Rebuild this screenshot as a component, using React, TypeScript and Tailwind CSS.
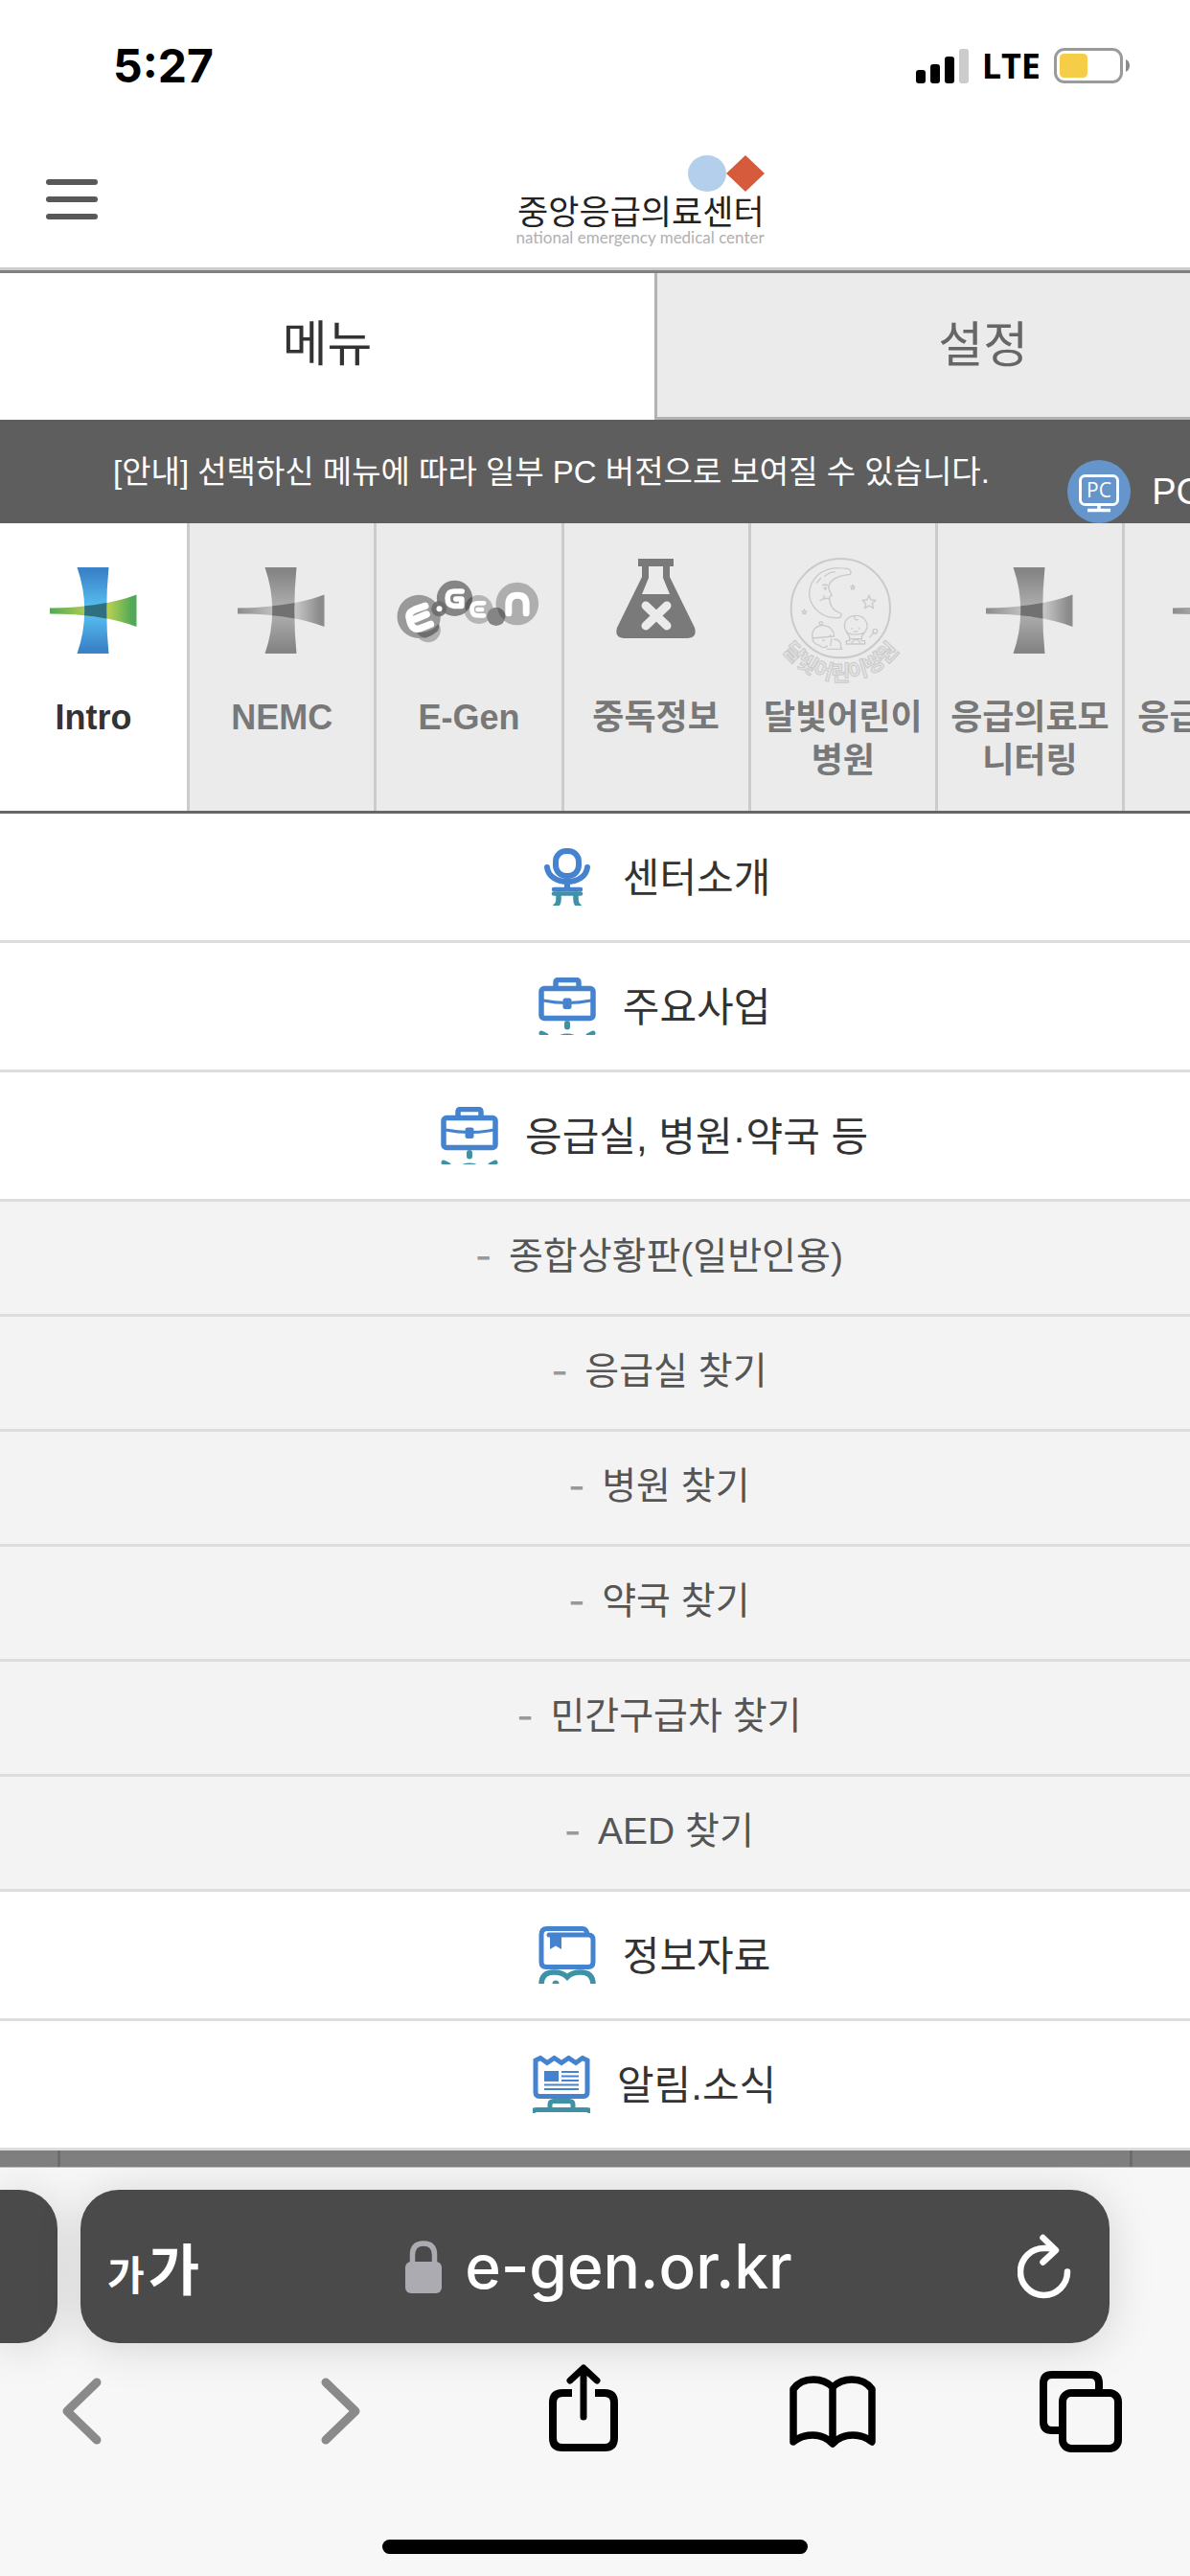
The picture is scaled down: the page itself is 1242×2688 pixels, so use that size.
import React from "react";

const KR = "font-['Liberation_Sans','Noto_Sans_CJK_KR',sans-serif]";

function SignalIcon() {
  return (
    <svg viewBox="0 0 55 36" className="h-9 w-[55px]" aria-hidden="true">
      <rect x="0" y="22" width="10" height="14" rx="3" fill="#000" />
      <rect x="15" y="16" width="10" height="20" rx="3" fill="#000" />
      <rect x="30" y="8" width="10" height="28" rx="3" fill="#000" />
      <rect x="45" y="0" width="10" height="36" rx="3" fill="#ccc" />
    </svg>
  );
}

function BatteryIcon() {
  return (
    <svg viewBox="0 0 80 37" className="h-[37px] w-20" aria-hidden="true">
      <rect x="1.5" y="1.5" width="69" height="34" rx="9.5" fill="none" stroke="#9a9a9a" strokeWidth="3" />
      <rect x="6" y="6" width="29" height="25" rx="4.5" fill="#f6cd46" />
      <path d="M75 12c2.600 1 4 3.500 4 6.500s-1.400 5.500-4 6.500z" fill="#8a8a8a" />
    </svg>
  );
}

function LogoMark() {
  return (
    <svg viewBox="0 0 80 38" className="h-[38px] w-20" aria-hidden="true">
      <ellipse cx="20" cy="19" rx="20" ry="19" fill="#b4cfec" />
      <path d="M60 0L80 19L60 38L40 19Z" fill="#d65b3d" />
    </svg>
  );
}

function PcIcon() {
  return (
    <svg viewBox="0 0 66 66" className="size-[66px]" aria-hidden="true">
      <circle cx="33" cy="33" r="33" fill="#6595ca" />
      <rect x="13.500" y="16.500" width="39" height="30" rx="5" fill="none" stroke="#fff" strokeWidth="3" />
      <path d="M33 47v5M21 52.500h24" stroke="#fff" strokeWidth="3.500" fill="none" />
      <text x="33" y="39" textAnchor="middle" fontSize="21" fontFamily="Open Sans, sans-serif" fill="#fff">
        PC
      </text>
    </svg>
  );
}

function CrossIcon({ color = false, id }: { color?: boolean; id: string }) {
  const edge = color ? "#3a83c8" : "#858585";
  const mid = color ? "#56bdf0" : "#adadad";
  const tip = color ? "#4fa956" : "#8b8b8b";
  const pale = color ? "#b5cf52" : "#c4c4c4";
  const core = color ? "#2f6f80" : "#717171";
  return (
    <svg viewBox="0 0 150 130" className="h-[130px] w-[150px]" aria-hidden="true">
      <defs>
        <linearGradient id={id + "v"} x1="0" y1="0" x2="0" y2="1">
          <stop offset="0.05" stopColor={edge} />
          <stop offset="0.45" stopColor={mid} />
          <stop offset="0.55" stopColor={mid} />
          <stop offset="0.95" stopColor={edge} />
        </linearGradient>
        <linearGradient id={id + "h"} x1="0" y1="0" x2="1" y2="0">
          <stop offset="0" stopColor={tip} />
          <stop offset="0.45" stopColor={pale} />
          <stop offset="0.68" stopColor={pale} />
          <stop offset="0.95" stopColor={tip} />
        </linearGradient>
        <clipPath id={id + "c"}>
          <path d="M57.500 10H90.500Q86 55 90.500 100H57.500Q73 55 57.500 10Z" />
        </clipPath>
      </defs>
      <path d="M57.500 10H90.500Q86 55 90.500 100H57.500Q73 55 57.500 10Z" fill={`url(#${id}v)`} />
      <path d="M29 52.500Q84 52 119.500 38.500V72Q84 58.500 29 58.500Z" fill={`url(#${id}h)`} />
      <path d="M29 52.500Q84 52 119.500 38.500V72Q84 58.500 29 58.500Z" fill={core} clipPath={`url(#${id}c)`} />
    </svg>
  );
}

function EGenIcon() {
  return (
    <svg viewBox="0 0 150 130" className="h-[130px] w-[150px]" aria-hidden="true">
      <g transform="translate(-9.500 8) scale(0.3333)">
        <circle cx="127" cy="202" r="39" fill="#b0b0b0" />
        <circle cx="98" cy="160" r="68" fill="#999" />
        <path d="M90 208Q135 214 160 182Q164 192 158 204Q142 220 118 227Q100 226 90 208Z" fill="#6e6e6e" />
        <circle cx="285" cy="138" r="45" fill="#b5b5b5" />
        <circle cx="210" cy="103" r="56" fill="#858585" />
        <circle cx="161" cy="136" r="24" fill="#6a6a6a" opacity="0.85" />
        <path d="M262 98Q250 105 244 120Q242 132 245 144Q262 128 266 103Z" fill="#5f5f5f" />
        <circle cx="406" cy="120" r="67" fill="#aeaeae" />
        <circle cx="340" cy="160" r="29" fill="#858585" />
        <path d="M343 132Q352 168 367 168Q372 150 360 140Q352 132 343 132Z" fill="#6a6a6a" />
        <circle cx="162" cy="136" r="9" fill="#fff" />
        <g fill="none" stroke="#fff" strokeLinecap="round" strokeLinejoin="round">
          <path d="M118 127L84 139Q62 148 69 170Q76 204 100 198L135 184M86 168L122 153" strokeWidth="22" />
          <path d="M233 81H208Q188 81 188 103Q188 127 208 127H232V105H214" strokeWidth="17" />
          <path d="M302 118H282Q264 118 264 137Q264 157 284 157H302M282 138H296" strokeWidth="14" />
          <path d="M379 149V122Q379 94 407 94Q434 94 434 122V149" strokeWidth="21" />
        </g>
      </g>
    </svg>
  );
}

function FlaskIcon() {
  return (
    <svg viewBox="0 0 150 130" className="h-[130px] w-[150px]" aria-hidden="true">
      <path
        fillRule="evenodd"
        d="M56 1H93V9H89V20L115 73Q118 83 108 84H41Q31 83 34 73L60 20V9H56ZM67 9V21L60 38H89L82 21V9Z"
        fill="#7a7a7a"
      />
      <path d="M64 50L86 71M86 50L64 71" stroke="#ebebeb" strokeWidth="9" strokeLinecap="round" />
    </svg>
  );
}

function MoonIcon() {
  return (
    <svg viewBox="0 0 150 130" className="h-[130px] w-[150px] overflow-visible" aria-hidden="true">
      <g
        transform="translate(-5 -12) scale(0.3333)"
        fill="none"
        stroke="#cacaca"
        strokeWidth="4"
        strokeLinecap="round"
        strokeLinejoin="round"
      >
        <circle cx="232" cy="194" r="155" strokeWidth="6" />
        <path d="M262 88C268 76 262 68 230 68C170 66 134 105 134 152C138 196 180 228 228 224C238 218 236 210 228 208C208 200 196 182 197 158L205 154L194 132C194 110 216 92 262 88Z" />
        <path d="M158 114L170 100M182 94Q196 82 214 80M176 122Q182 118 190 122M168 170Q180 160 194 164M180 154V166" />
        <circle cx="184" cy="132" r="3" />
        <path d="M321 154L327 168L342 169L331 179L335 194L321 186L307 194L311 179L300 169L315 168Z" />
        <path d="M270 121L272 126L277 127L273 130L274 135L270 132L266 135L267 130L263 127L268 126ZM118 198L120 203L125 204L121 207L122 212L118 209L114 212L115 207L111 204L116 203Z" />
        <path d="M248 262C240 250 244 218 279 217C314 216 320 250 312 262M248 262C252 280 304 282 312 262M276 220Q274 232 286 230M250 268L260 284V296H250V306H308V296H298V284L308 268M262 290H296M266 306Q270 292 280 292Q290 292 294 306" />
        <path d="M266 258H268M290 258H292M274 266Q279 270 285 266M330 276L336 270M324 284L328 280" />
        <circle cx="340" cy="266" r="7" />
        <path d="M144 284C140 262 158 246 178 248C200 250 210 262 212 282L144 288C144 296 150 308 166 310C170 318 184 320 190 312M212 292C226 290 236 304 232 314L236 322H190M204 290L200 310M176 294L182 296M198 284L200 278" />
        <circle cx="171" cy="241" r="5" />
      </g>
      <defs>
        <path id="moonArc" d="M1.800 78.400A75 75 0 0 0 142.800 78.400" />
      </defs>
      <text
        fontFamily="Noto Sans CJK KR, sans-serif"
        fontWeight="700"
        fontSize="22"
        fill="#e4e4e4"
        stroke="#cacaca"
        strokeWidth="1"
        textAnchor="middle"
      >
        <textPath href="#moonArc" startOffset="50%">
          달빛어린이병원
        </textPath>
      </text>
    </svg>
  );
}

const BLUE = "#4683cf";
const TEAL = "#3f91a5";

function ChairIcon() {
  return (
    <svg viewBox="0 0 60 60" className="size-[60px]" aria-hidden="true" fill="none" strokeLinecap="round">
      <rect x="18" y="3" width="24" height="26" rx="11" stroke={BLUE} strokeWidth="6" />
      <path d="M9 20C10 30 20 35 30 35S50 30 51 20" stroke={BLUE} strokeWidth="6" />
      <path d="M30 36V42" stroke={BLUE} strokeWidth="6" strokeLinecap="butt" />
      <path d="M16 47.500H44" stroke={TEAL} strokeWidth="4.500" />
      <path d="M16 43H44" stroke={BLUE} strokeWidth="4.500" />
      <path d="M21 48V54Q21 58 17.500 61M39 48V54Q39 58 42.500 61" stroke={TEAL} strokeWidth="5.500" />
    </svg>
  );
}

function BriefcaseIcon() {
  return (
    <svg viewBox="0 0 60 60" className="size-[60px]" aria-hidden="true" fill="none">
      <path d="M18 10V5.500Q18 2.500 21 2.500H39Q42 2.500 42 5.500V10" stroke={BLUE} strokeWidth="5.500" />
      <rect x="3" y="11.500" width="54" height="31" rx="3" stroke={BLUE} strokeWidth="5.500" />
      <path d="M5 24Q30 29 55 24" stroke={BLUE} strokeWidth="3" />
      <rect x="25.500" y="21.500" width="9" height="11.500" rx="2.500" fill={BLUE} />
      <path d="M30 48V51.500" stroke={TEAL} strokeWidth="6" strokeLinecap="round" />
      <path d="M3 58L8 60.500M57 58L52 60.500" stroke={TEAL} strokeWidth="5" strokeLinecap="round" />
      <ellipse cx="30" cy="62" rx="9" ry="3.500" fill={TEAL} />
    </svg>
  );
}

function BookIcon() {
  return (
    <svg viewBox="0 0 60 60" className="size-[60px]" aria-hidden="true" fill="none">
      <path d="M51 8Q50 2.500 46 2.500H9Q3 2.500 3 9V37Q3 42.500 8 42.500H52Q57 42.500 57 37V14Q57 9 52 9H11" stroke={BLUE} strokeWidth="5" strokeLinecap="round" />
      <path d="M12 9H24V24L18 20.500L12 24Z" fill={BLUE} />
      <path d="M3 61Q3 48 16 48Q25 48 30 53Q35 48 44 48Q57 48 57 61" stroke={TEAL} strokeWidth="5.500" />
      <circle cx="18" cy="60" r="3.500" fill={TEAL} />
    </svg>
  );
}

function NewsIcon() {
  return (
    <svg viewBox="0 0 60 60" className="size-[60px]" aria-hidden="true" fill="none">
      <path d="M3 5L8 2.500L15 7.500L22.500 2.500L30 7.500L37.500 2.500L45 7.500L52 2.500L57 5V38Q57 42.500 53 42.500H7Q3 42.500 3 38Z" stroke={BLUE} strokeWidth="5" />
      <rect x="12" y="16" width="15" height="11" fill={BLUE} />
      <path d="M30 17H48M30 21.500H48M30 26H48M12 30.500H48M12 35H48" stroke={BLUE} strokeWidth="2.200" />
      <path d="M18 56V51Q18 47.500 22 47.500H38Q42 47.500 42 51V56M0 63V60Q0 56.500 4 56.500H56Q60 56.500 60 60V63" stroke={TEAL} strokeWidth="5" />
    </svg>
  );
}

function LockIcon() {
  return (
    <svg viewBox="0 0 38 55" className="h-[55px] w-[38px]" aria-hidden="true">
      <rect x="0" y="22" width="38" height="33" rx="6" fill="#acabb2" />
      <path d="M7.500 24V15Q7.500 3 19 3Q30.500 3 30.500 15V24" fill="none" stroke="#acabb2" strokeWidth="5.500" />
    </svg>
  );
}

function ReloadIcon() {
  return (
    <svg viewBox="0 0 56 68" className="h-[68px] w-14" aria-hidden="true" fill="none" stroke="#fff" strokeWidth="6.500" strokeLinecap="round" strokeLinejoin="round">
      <path d="M38 16Q33 14.500 28 15A24.500 24.500 0 1 0 52 39.500" />
      <path d="M26.500 4L40 17L26.500 29.500" />
    </svg>
  );
}

const categories = [
  { label: "Intro", icon: <CrossIcon color id="intro" /> },
  { label: "NEMC", icon: <CrossIcon id="nemc" /> },
  { label: "E-Gen", icon: <EGenIcon /> },
  { label: "중독정보", icon: <FlaskIcon /> },
  { label: "달빛어린이병원", icon: <MoonIcon /> },
  { label: "응급의료모니터링", icon: <CrossIcon id="monitoring" /> },
  { label: "응급의료정보", icon: <CrossIcon id="info" /> },
];

const finders = ["종합상황판(일반인용)", "응급실 찾기", "병원 찾기", "약국 찾기", "민간구급차 찾기", "AED 찾기"];

function MenuRow({ icon, label }: { icon: React.ReactNode; label: string }) {
  return (
    <li>
      <a href="#" className="flex h-[135px] items-center justify-center gap-7 border-b-[3px] border-[#ddd] bg-white text-[42px] leading-none text-[#333]">
        {icon}
        <span className="pt-1">{label}</span>
      </a>
    </li>
  );
}

export default function App() {
  return (
    <div className={`flex min-h-screen flex-col overflow-hidden bg-white ${KR}`}>
      <div className="flex h-[137px] items-center justify-between pr-[62px] pl-[118px] font-['Inter',sans-serif] text-black">
        <span className="text-[48px] leading-none font-bold">5:27</span>
        <div className="flex items-center gap-3.5">
          <SignalIcon />
          <span className="font-['Open_Sans',sans-serif] text-[36px] leading-none font-bold">LTE</span>
          <BatteryIcon />
        </div>
      </div>

      <div className="w-[110%]">
        <header className="grid h-[145px] grid-cols-[1fr_auto_1fr] items-center border-b-[3px] border-[#ccc] pr-[78px] pl-12">
          <button aria-label="메뉴 열기" className="flex w-[54px] flex-col gap-3">
            <span className="h-1.5 rounded-full bg-[#585858]" />
            <span className="h-1.5 rounded-full bg-[#585858]" />
            <span className="h-1.5 rounded-full bg-[#585858]" />
          </button>
          <a href="#" className="flex flex-col items-end pt-1">
            <LogoMark />
            <span className="mt-1.5 text-[35px] leading-8 text-[#222]">중앙응급의료센터</span>
            <span className="font-['Lato',sans-serif] text-[17px] leading-5 text-[#b0b0b0]">national emergency medical center</span>
          </a>
        </header>

        <div role="tablist" className="grid h-[156px] grid-cols-2 border-t-[3px] border-[#808080] text-[51px] leading-none">
          <button role="tab" aria-selected="true" className="bg-white pb-1 text-[#333]">
            메뉴
          </button>
          <button role="tab" aria-selected="false" className="border-b-[3px] border-l-[3px] border-[#b2b2b2] bg-[#ebebeb] text-[#666]">
            설정
          </button>
        </div>

        <div className="flex h-[108px] items-center justify-between bg-[#5e5e5e] pl-[118px] text-white">
          <p className="text-[33px] leading-none whitespace-nowrap">[안내] 선택하신 메뉴에 따라 일부 PC 버전으로 보여질 수 있습니다.</p>
          <a href="#" className="flex w-[252px] items-center gap-[22px] self-end text-[38px] leading-none">
            <PcIcon />
            <span>PC</span>
          </a>
        </div>

        <nav className="grid h-[303px] grid-cols-7 border-b-[3px] border-[#666] text-[36px] leading-[45px] font-bold">
          {categories.map((c, i) => (
            <a
              key={c.label}
              href="#"
              className={
                i === 0
                  ? "flex flex-col items-center gap-3.5 bg-white pt-9 text-[#333]"
                  : "flex flex-col items-center gap-3.5 border-l-[3px] border-[#ccc] bg-[#ebebeb] pt-9 text-[#787878]"
              }
            >
              {c.icon}
              <span className="px-1 text-center break-all">{c.label}</span>
            </a>
          ))}
        </nav>

        <ul>
          <MenuRow icon={<ChairIcon />} label="센터소개" />
          <MenuRow icon={<BriefcaseIcon />} label="주요사업" />
          <MenuRow icon={<BriefcaseIcon />} label="응급실, 병원·약국 등" />
          {finders.map((f) => (
            <li key={f}>
              <a href="#" className="flex h-[120px] items-center justify-center gap-[18px] border-b-[3px] border-[#ddd] bg-[#f3f3f3] pb-1 pl-2.5 text-[39px] leading-none text-[#555]">
                <span className="pb-3 font-['Noto_Sans_CJK_KR',sans-serif] text-[48px] leading-none text-[#999]">-</span>
                <span>{f}</span>
              </a>
            </li>
          ))}
          <MenuRow icon={<BookIcon />} label="정보자료" />
          <MenuRow icon={<NewsIcon />} label="알림.소식" />
        </ul>
      </div>

      <div className="h-[18px] border-b border-[#bbb] bg-[#7f7f7f] px-[60px]">
        <div className="h-full border-x-[3px] border-[#6c6c6c]" />
      </div>

      <footer className="flex flex-1 flex-col overflow-hidden bg-[#f7f7f7] pt-[23px]">
        <div className="flex gap-6">
          <div className="h-40 w-[60px] rounded-r-[40px] bg-[#4a4a4a] shadow-[0_4px_48px_rgba(0,0,0,0.15)]" />
          <div className="mr-21 grid h-40 flex-1 grid-cols-[1fr_auto_1fr] items-center rounded-[40px] bg-[#4a4a4a] px-7 text-white shadow-[0_4px_48px_rgba(0,0,0,0.15)]">
            <button aria-label="보기 설정" className="flex items-baseline gap-1 font-['Noto_Sans_CJK_KR',sans-serif] leading-none font-bold">
              <span className="text-[42px]">가</span>
              <span className="text-[58px]">가</span>
            </button>
            <div className="flex items-center gap-6 pl-2">
              <LockIcon />
              <span className="font-['Inter',sans-serif] text-[64px] leading-none font-medium">e-gen.or.kr</span>
            </div>
            <button aria-label="새로고침" className="mr-3 justify-self-end">
              <ReloadIcon />
            </button>
          </div>
        </div>

        <div className="mt-[22px] flex items-start justify-between pr-[69px] pl-[45px]" role="toolbar" aria-label="브라우저 도구">
          <button aria-label="뒤로" className="flex w-[90px] justify-center pt-3.5 pr-2.5">
            <svg viewBox="0 0 41 70" className="h-[70px] w-[41px]" fill="none" stroke="#8a8a8a" strokeWidth="9" strokeLinecap="round" strokeLinejoin="round">
              <path d="M36 5L5 35L36 65" />
            </svg>
          </button>
          <button aria-label="앞으로" className="flex w-[90px] justify-center pt-3.5 pl-3">
            <svg viewBox="0 0 41 70" className="h-[70px] w-[41px]" fill="none" stroke="#8a8a8a" strokeWidth="9" strokeLinecap="round" strokeLinejoin="round">
              <path d="M5 5L36 35L5 65" />
            </svg>
          </button>
          <button aria-label="공유" className="flex w-[90px] justify-center">
            <svg viewBox="0 0 72 91" className="h-[91px] w-[72px]" fill="none" stroke="#000" strokeWidth="8">
              <path d="M24 30H14Q4 30 4 40V77Q4 87 14 87H58Q68 87 68 77V40Q68 30 58 30H48" />
              <path d="M36 55V5M22 17L36 4L50 17" strokeWidth="7" strokeLinecap="round" strokeLinejoin="round" />
            </svg>
          </button>
          <button aria-label="책갈피" className="flex w-[90px] justify-center pt-3">
            <svg viewBox="0 0 90 75" className="h-[75px] w-[90px]" fill="none" stroke="#000" strokeWidth="7.500" strokeLinejoin="round" strokeLinecap="round">
              <path d="M45 12Q37 4 25 4Q11 4 4 14V69Q12 62 24 62Q37 62 45 71Q53 62 66 62Q78 62 86 69V14Q79 4 65 4Q53 4 45 12V70" />
            </svg>
          </button>
          <button aria-label="탭" className="flex w-[90px] justify-center pt-[7px]">
            <svg viewBox="0 0 86 85" className="h-[85px] w-[86px]" fill="none" stroke="#000" strokeWidth="8">
              <path d="M22 62H13Q4 62 4 53V13Q4 4 13 4H53Q62 4 62 13V20" />
              <rect x="24" y="23" width="58" height="58" rx="9" />
            </svg>
          </button>
        </div>
        <div className="mx-auto mt-[91px] h-[15px] w-[444px] rounded-full bg-black" />
      </footer>
    </div>
  );
}
